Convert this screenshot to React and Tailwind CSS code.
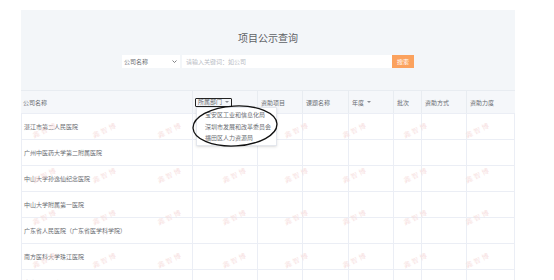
import React from 'react';

const COLS = 'grid grid-cols-[172px_65px_45px_46px_45px_28px_45px_48px]';

const hospitals = [
  '湛江市第二人民医院',
  '广州中医药大学第二附属医院',
  '中山大学孙逸仙纪念医院',
  '中山大学附属第一医院',
  '广东省人民医院（广东省医学科学院）',
  '南方医科大学珠江医院',
  '南方人民医院',
];

const departments = ['宝安区工业和信息化局', '深圳市发展和改革委员会', '福田区人力资源局'];

// watermark grid, page coords
const markXs = [45, 105, 170, 235, 297, 355, 416, 478];
const markYs = [130, 175, 217, 260];

const Caret = () => (
  <svg width="4" height="2" viewBox="0 0 4 2" className="ml-[3px] inline-block">
    <path d="M0 0 L4 0 L2 2 Z" fill="#8a8d93" />
  </svg>
);

export default function App() {
  return (
    <div className="w-[554px] h-[280px] overflow-hidden bg-white font-['Noto_Sans_CJK_SC','Noto_Sans',sans-serif]">
      <div className="relative ml-[21px] mt-[10px] w-[494px] bg-[#f3f6f9]">
        {/* search header */}
        <div className="h-[80px] flex flex-col items-center">
          <h1 className="mt-[22px] text-[10px] leading-[12px] text-[#5f6266]">项目公示查询</h1>
          <div className="mt-[11px] flex h-[13px] text-[6px] leading-[13px]">
            <div className="w-[58px] bg-white flex items-center justify-between pl-[2px] pr-[3px] text-[#6a6d72]">
              <span>公司名称</span>
              <svg width="5" height="3" viewBox="0 0 5 3">
                <path d="M0.5 0.5 L2.5 2.5 L4.5 0.5" stroke="#606266" strokeWidth="0.8" fill="none" />
              </svg>
            </div>
            <div className="ml-[2px] w-[210px] bg-white pl-[4px] text-[#b8bcc4]">请输入关键词：如公司</div>
            <div className="w-[22px] bg-[#fba25e] text-white text-center">搜索</div>
          </div>
        </div>

        {/* table */}
        <div className="bg-white text-[6px] text-[#6a6d72]">
          <div className={`${COLS} h-[23px] bg-[#f5f7fa] border-t border-[#e8ecf1]`}>
            <div className="flex items-center pl-[2px] border-r border-[#e8ecf1]">公司名称</div>
            <div className="flex items-center pl-[2px] border-r border-[#e8ecf1]">
              <span className="flex items-center h-[9px] px-[2px] border border-[#222] rounded-[1px] leading-none">
                所属部门<Caret />
              </span>
            </div>
            <div className="flex items-center pl-[3px] border-r border-[#e8ecf1]">资助项目</div>
            <div className="flex items-center pl-[3px] border-r border-[#e8ecf1]">课题名称</div>
            <div className="flex items-center pl-[3px] border-r border-[#e8ecf1]">年度<Caret /></div>
            <div className="flex items-center pl-[3px] border-r border-[#e8ecf1]">批次</div>
            <div className="flex items-center pl-[3px] border-r border-[#e8ecf1]">资助方式</div>
            <div className="flex items-center pl-[3px]">资助力度</div>
          </div>
          {hospitals.map((name, i) => (
            <div key={i} className={`${COLS} h-[26px] border-t border-[#ebeef5]`}>
              <div className="flex items-center pl-[2px] border-l border-r border-[#ebeef5]">{name}</div>
              <div className="border-r border-[#ebeef5]" />
              <div className="border-r border-[#ebeef5]" />
              <div className="border-r border-[#ebeef5]" />
              <div className="border-r border-[#ebeef5]" />
              <div className="border-r border-[#ebeef5]" />
              <div className="border-r border-[#ebeef5]" />
              <div className="border-r border-[#ebeef5]" />
            </div>
          ))}
        </div>

        {/* watermarks */}
        {markYs.map((y) =>
          markXs.map((x) => (
            <span
              key={`${x}-${y}`}
              className="pointer-events-none absolute -translate-x-1/2 -translate-y-1/2 -rotate-[25deg] text-[7px] tracking-[2px] text-[#f6dada] font-['Noto_Serif_CJK_SC','Noto_Sans_CJK_SC',serif]"
              style={{ left: x - 21, top: y - 10 }}
            >
              鑫智博
            </span>
          ))
        )}

        {/* department dropdown */}
        <div className="absolute left-[175px] top-[97px] w-[81px] h-[39px] bg-white border border-[#e4e7ed] shadow-sm pl-[8px] pt-[1px] text-[6px] leading-[11.5px] text-[#6a6d72]">
          {departments.map((d) => (
            <div key={d}>{d}</div>
          ))}
        </div>
        <svg className="absolute left-[170px] top-[94px]" width="90" height="46" viewBox="0 0 90 46">
          <ellipse cx="44" cy="22" rx="42" ry="20" fill="none" stroke="#111" strokeWidth="1.3" transform="rotate(-3 44 22)" />
        </svg>
      </div>
    </div>
  );
}
